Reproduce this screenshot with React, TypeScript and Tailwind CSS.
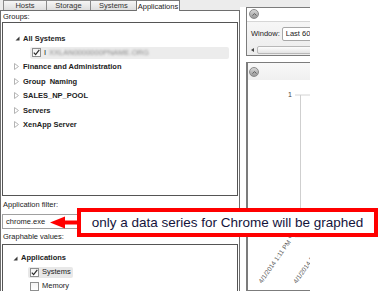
import React from 'react'

const GROUPS = ['Finance and Administration', 'Group  Naming', 'SALES_NP_POOL', 'Servers', 'XenApp Server']

const TABS = [
  { label: 'Hosts', w: 'w-[43px]' },
  { label: 'Storage', w: 'w-[44px]' },
  { label: 'Systems', w: 'w-[46px]' },
]

function Collapsed() {
  return (
    <svg width="5" height="7" viewBox="0 0 5 7" className="shrink-0">
      <path d="M0.5 0.5 L4.5 3.5 L0.5 6.5 Z" fill="#fff" stroke="#b4b4b4" strokeWidth="1" />
    </svg>
  )
}

function Expanded() {
  return (
    <svg width="5" height="5" viewBox="0 0 5 5" className="shrink-0">
      <path d="M4.5 0.5 L4.5 4.5 L0.5 4.5 Z" fill="#3a3a3a" />
    </svg>
  )
}

function Check({ checked }: { checked?: boolean }) {
  return (
    <div className="w-[9px] h-[9px] shrink-0 border border-[#8e8f8f] bg-gradient-to-b from-[#f4f4f4] to-[#ffffff] flex items-center justify-center">
      {checked && (
        <svg width="7" height="7" viewBox="0 0 7 7">
          <path d="M0.8 3.6 L2.6 5.6 L6.3 0.8" fill="none" stroke="#2b2b2b" strokeWidth="1.2" />
        </svg>
      )}
    </div>
  )
}

function CircleButton() {
  return (
    <div className="w-[10px] h-[10px] rounded-full bg-gradient-to-b from-[#d8d8d8] to-[#9a9a9a] border border-[#8a8a8a] flex items-center justify-center">
      <svg width="5" height="3" viewBox="0 0 5 3">
        <path d="M0.5 2.5 L2.5 0.7 L4.5 2.5" fill="none" stroke="#555" strokeWidth="0.9" />
      </svg>
    </div>
  )
}

export default function App() {
  return (
    <div className="w-[387px] h-[291px] relative overflow-hidden bg-white font-['Liberation_Sans',Arial,sans-serif] text-[#222]">
      <div className="flex w-[310px] h-full">
        {/* Left column */}
        <div className="w-[240px] shrink-0 flex flex-col">
          <div className="flex h-[11px] items-end bg-[#ececec] pl-[3px]">
            {TABS.map((t) => (
              <div
                key={t.label}
                className={`${t.w} h-[10px] border-t border-l border-[#8a8a8a] bg-gradient-to-b from-[#f6f6f6] to-[#dedede] text-[7.5px] leading-[10px] text-center text-[#333]`}
              >
                {t.label}
              </div>
            ))}
            <div className="w-[44px] h-[11px] border-x border-t border-[#7a7a7a] bg-white text-[7.5px] leading-[11px] text-center text-[#222] -mb-px relative">
              Applications
            </div>
          </div>

          <div className="flex-1 border border-[#6e6e6e] px-[1px] flex flex-col">
            <div className="h-[11px] text-[7.5px] leading-[11px] pl-[1px]">Groups:</div>
            <div className="h-[174px] border border-[#555] pt-[8px] flex flex-col">
              <div className="h-[14.4px] flex items-center pl-[12px] gap-[3px]">
                <Expanded />
                <span className="text-[7.5px] font-bold">All Systems</span>
              </div>
              <div className="h-[14.4px] flex items-center pl-[27px] pr-[8px]">
                <div className="flex-1 h-[12px] rounded-[2px] bg-[#ececec] flex items-center pl-[2px] gap-[3px]">
                  <Check checked />
                  <span className="text-[7.5px]">I</span>
                  <span className="text-[7.5px] text-[#8a8a8a] blur-[1.3px]">XXLAN0000000PNAME.ORG</span>
                </div>
              </div>
              {GROUPS.map((g) => (
                <div key={g} className="h-[14.4px] flex items-center pl-[11px] gap-[4px]">
                  <Collapsed />
                  <span className="text-[7.5px] font-bold whitespace-pre">{g}</span>
                </div>
              ))}
            </div>

            <div className="h-[16px] text-[7.5px] leading-[16px] pl-[1px] pt-[1px]">Application filter:</div>
            <div className="h-[15px] w-[80px] border border-[#a0a0a0] text-[7.5px] leading-[13px] pl-[3px] mt-[2px]">
              chrome.exe
            </div>
            <div className="h-[15px] text-[7.5px] leading-[15px] pl-[1px]">Graphable values:</div>
            <div className="flex-1 border border-[#555] pt-[6px] flex flex-col">
              <div className="h-[14px] flex items-center pl-[10px] gap-[3px]">
                <Expanded />
                <span className="text-[7.5px] font-bold">Applications</span>
              </div>
              <div className="h-[14px] flex items-center pl-[25px]">
                <div className="w-[45px] h-[11px] rounded-[2px] bg-[#e8e8e8] flex items-center pl-[2px] gap-[3px]">
                  <Check checked />
                  <span className="text-[7.5px]">Systems</span>
                </div>
              </div>
              <div className="h-[14px] flex items-center pl-[27px] gap-[3px]">
                <Check />
                <span className="text-[7.5px]">Memory</span>
              </div>
            </div>
          </div>
        </div>

        {/* Right column */}
        <div className="flex-1 flex flex-col overflow-hidden bg-white">
          <div className="h-[7px] bg-[#ececec]" />
          <div className="ml-[6px] w-[120px] h-[52px] border border-[#7c7c7c] flex flex-col">
            <div className="h-[13px] bg-white flex items-center pl-[2px]">
              <CircleButton />
            </div>
            <div className="flex-1 bg-gradient-to-b from-[#f6f6f6] to-[#ececec] border-t border-[#d6d6d6] flex flex-col pl-[4px] pt-[5px]">
              <div className="flex items-center gap-[2px] h-[14px]">
                <span className="text-[7.5px]">Window:</span>
                <div className="h-[14px] w-[60px] border border-[#a8a8a8] rounded-[2px] bg-white text-[7.5px] leading-[12px] pl-[3px]">
                  Last 60
                </div>
              </div>
              <div className="flex items-center gap-[3px] mt-[5px] h-[8px]">
                <svg width="3" height="4" viewBox="0 0 3 4">
                  <path d="M0 2 L3 0 L3 4 Z" fill="#444" />
                </svg>
                <div className="w-[80px] h-[8px] border border-[#b8b8b8] rounded-[2px] bg-gradient-to-b from-[#fdfdfd] to-[#e4e4e4]" />
              </div>
            </div>
          </div>

          <div className="ml-[6px] mt-[6px] w-[120px] flex-1 border border-[#7c7c7c] border-l-2 flex flex-col">
            <div className="h-[17px] flex items-center pl-[1px] pt-[1px] bg-gradient-to-b from-[#f8f8f8] to-[#f0f0f0]">
              <CircleButton />
            </div>
            <div className="flex-1 bg-white">
              <svg width="120" height="210" viewBox="0 0 120 210" className="font-['Liberation_Sans',Arial,sans-serif]">
                <text x="44" y="17" fontSize="7" fill="#444" textAnchor="end">1</text>
                <line x1="47" y1="15" x2="120" y2="15" stroke="#d4d4d4" strokeWidth="1" />
                <line x1="52.5" y1="15" x2="52.5" y2="157" stroke="#cfcfcf" strokeWidth="1" />
                <text x="44" y="158" fontSize="7" fill="#444" textAnchor="end">0</text>
                <line x1="47" y1="156.5" x2="120" y2="156.5" stroke="#bdbdbd" strokeWidth="1.5" />
                <text x="43" y="162" fontSize="6.5" fill="#555" textAnchor="end" transform="rotate(-55 43 162)">4/1/2014 1:11 PM</text>
                <text x="78" y="162" fontSize="6.5" fill="#555" textAnchor="end" transform="rotate(-55 78 162)">4/1/2014 1:12 PM</text>
              </svg>
            </div>
          </div>
        </div>
      </div>

      {/* Callout */}
      <svg width="30" height="14" viewBox="0 0 30 14" className="absolute left-[49px] top-[215px]">
        <path d="M1 7.5 L16 1.5 L16 13.5 Z" fill="#f00" />
        <rect x="15" y="5.5" width="15" height="4" fill="#f00" />
      </svg>
      <div className="absolute left-[77px] top-[208px] w-[301px] h-[29px] border-4 border-[#f00] bg-white flex items-center justify-center">
        <span className="text-[13.5px] text-[#14143c] leading-none">only a data series for Chrome will be graphed</span>
      </div>
    </div>
  )
}
